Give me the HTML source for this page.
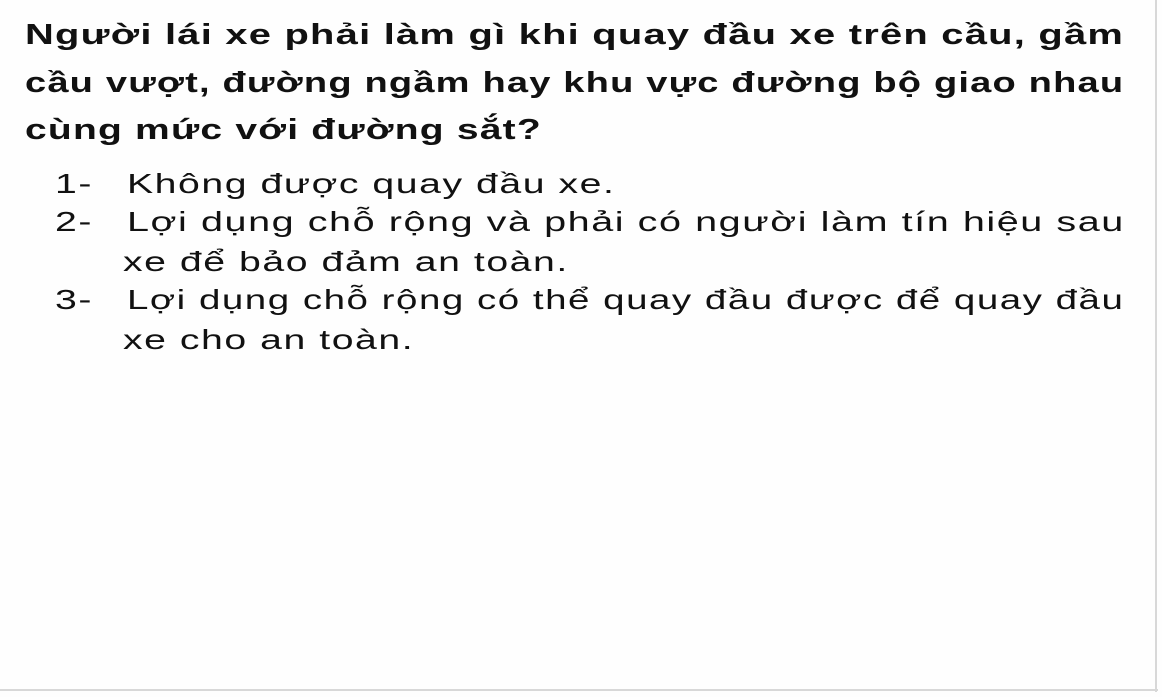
<!DOCTYPE html>
<html><head><meta charset="utf-8"><style>
body{margin:0;width:1162px;height:697px;background:#fefefe;position:relative;overflow:hidden;font-family:"Liberation Sans",Arial,sans-serif;color:#111}
.l{position:absolute;white-space:nowrap;line-height:1;transform-origin:0 0}
.b{font-weight:bold;font-size:29px;letter-spacing:0.9px;left:25px;transform:scaleX(1.375)}
.n{font-size:28px;letter-spacing:1.1px;transform:scaleX(1.4)}
.num{font-size:28px;left:55px;letter-spacing:1.1px;transform:scaleX(1.4)}
.rb{position:absolute;left:1155px;top:0;width:2px;height:692px;background:#d8d8d8}
.bb{position:absolute;left:0;top:689px;width:1158px;height:2px;background:#d8d8d8}
</style></head><body>
<div class="l b" style="top:21px">Người lái xe phải làm gì khi quay đầu xe trên cầu, gầm</div>
<div class="l b" style="top:69px;transform:scaleX(1.312)">cầu vượt, đường ngầm hay khu vực đường bộ giao nhau</div>
<div class="l b" style="top:116px;transform:scaleX(1.345)">cùng mức với đường sắt?</div>
<div class="l num" style="top:170px">1-</div>
<div class="l n" style="top:170px;left:127px">Không được quay đầu xe.</div>
<div class="l num" style="top:208px">2-</div>
<div class="l n" style="top:208px;left:127px;transform:scaleX(1.413)">Lợi dụng chỗ rộng và phải có người làm tín hiệu sau</div>
<div class="l n" style="top:248px;left:123px">xe để bảo đảm an toàn.</div>
<div class="l num" style="top:286px">3-</div>
<div class="l n" style="top:286px;left:127px;transform:scaleX(1.375)">Lợi dụng chỗ rộng có thể quay đầu được để quay đầu</div>
<div class="l n" style="top:326px;left:123px">xe cho an toàn.</div>
<div class="rb"></div><div class="bb"></div>
</body></html>
